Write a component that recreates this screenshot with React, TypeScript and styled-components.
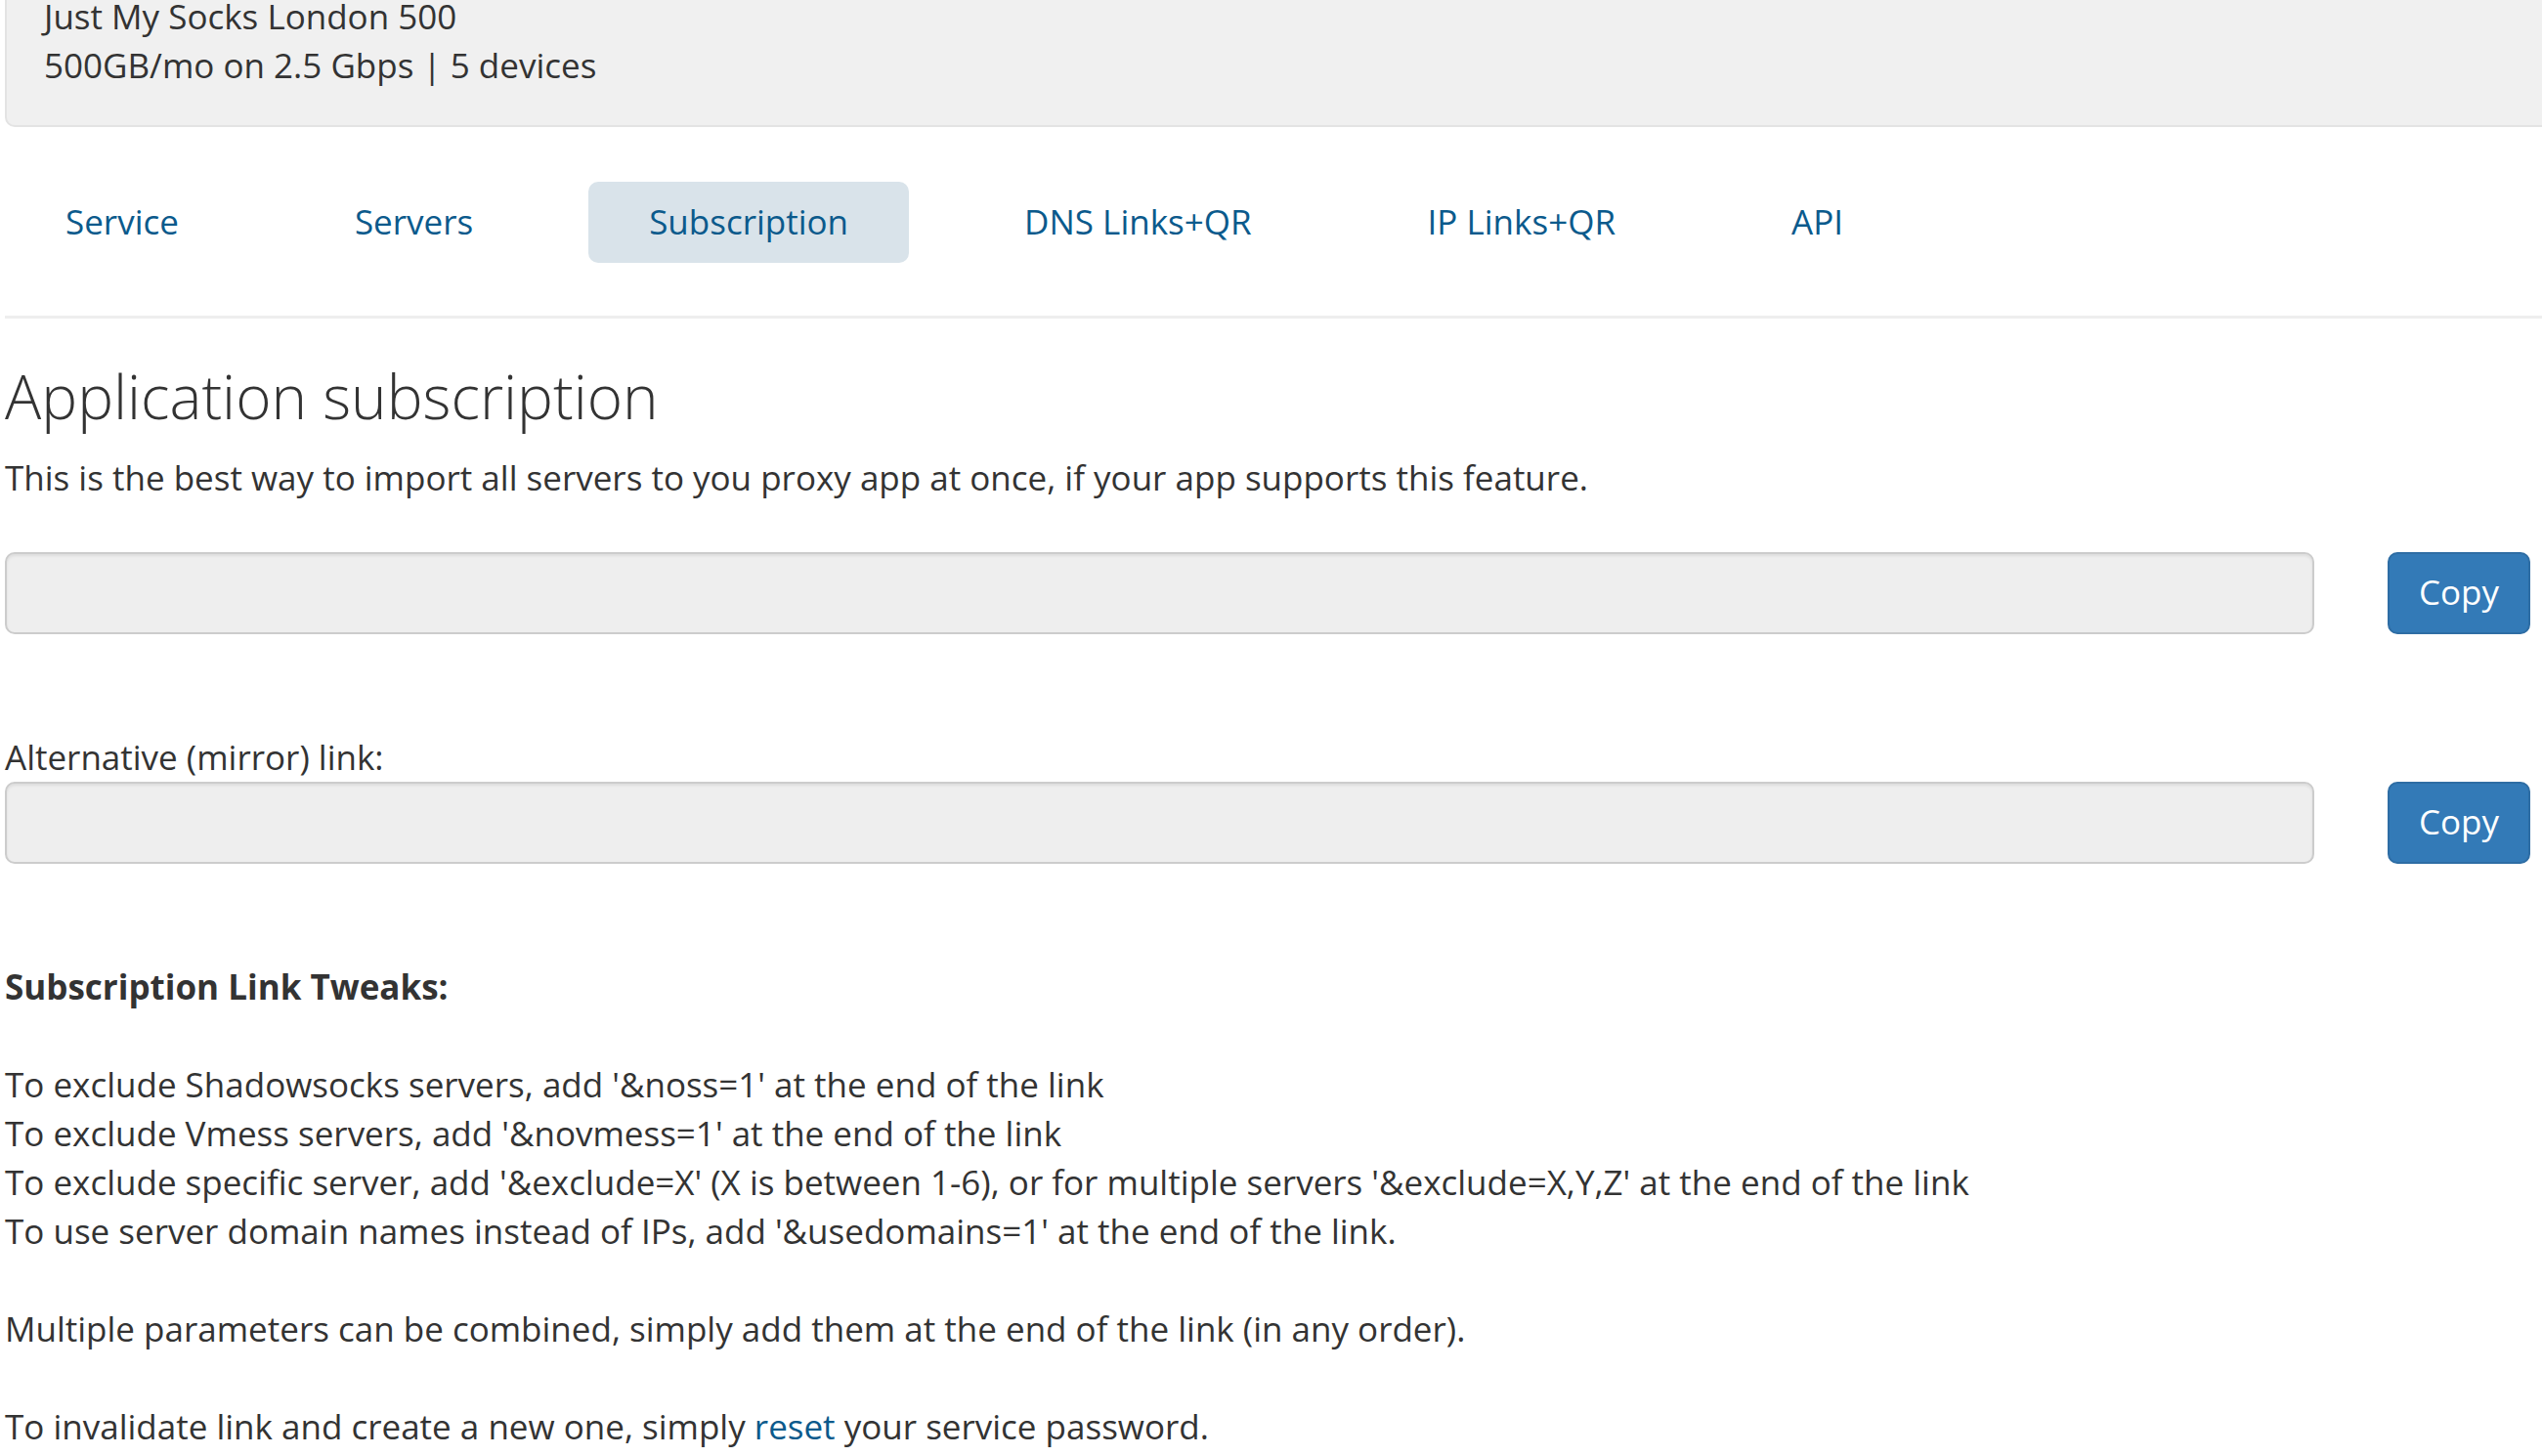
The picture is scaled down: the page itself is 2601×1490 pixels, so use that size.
import styled, { createGlobalStyle } from 'styled-components';

const GlobalStyle = createGlobalStyle`
  html, body {
    margin: 0;
    padding: 0;
    background: #fff;
    overflow-x: hidden;
  }
  body {
    font-family: "Open Sans", "Liberation Sans", sans-serif;
    font-size: 35px;
    line-height: 50px;
    color: #333;
  }
`;

const Page = styled.div`
  padding: 0 0 40px 5px;
`;

const ServiceBox = styled.div`
  margin: -48px -20px 0 0;
  padding: 38px 38px 36px 38px;
  background: #f0f0f0;
  border: 2px solid #e3e3e3;
  border-radius: 10px;
`;

const Tabs = styled.ul`
  display: flex;
  gap: 56px;
  list-style: none;
  margin: 56px 0 0;
  padding: 0 0 54px;
  border-bottom: 3px solid #eee;
`;

const Tab = styled.li<{ $active?: boolean }>`
  display: block;
  padding: 16px 62px 17px;
  border-radius: 10px;
  color: #0b5a8c;
  background: ${(p) => (p.$active ? '#d9e3ea' : 'transparent')};
  cursor: pointer;
`;

const Heading = styled.h3`
  margin: 45px 0 25px;
  font-size: 62px;
  font-weight: 300;
  line-height: 68px;
  color: #333;
`;

const Text = styled.p`
  margin: 0;
`;

const LinkRow = styled.div<{ $top: number }>`
  display: flex;
  gap: 75px;
  padding-right: 12px;
  margin-top: ${(p) => p.$top}px;
`;

const LinkInput = styled.input`
  flex: 1;
  box-sizing: border-box;
  height: 84px;
  padding: 0 30px;
  font: inherit;
  color: #555;
  background: #eee;
  border: 2px solid #ccc;
  border-radius: 10px;
  box-shadow: inset 0 2px 3px rgba(0, 0, 0, 0.075);
  outline: none;
`;

const CopyButton = styled.button`
  box-sizing: border-box;
  width: 146px;
  height: 84px;
  padding: 0 0 2px;
  font: inherit;
  color: #fff;
  background: #337ab7;
  border: 2px solid #2e6da4;
  border-radius: 10px;
  cursor: pointer;
`;

const Label = styled.div`
  margin-top: 101px;
`;

const Tweaks = styled.div`
  margin-top: 101px;
`;

const Blank = styled.div`
  height: 50px;
`;

const Link = styled.a`
  color: #0b5a8c;
  text-decoration: none;
`;

const tabs = ['Service', 'Servers', 'Subscription', 'DNS Links+QR', 'IP Links+QR', 'API'];

const tweaks = [
  "To exclude Shadowsocks servers, add '&noss=1' at the end of the link",
  "To exclude Vmess servers, add '&novmess=1' at the end of the link",
  "To exclude specific server, add '&exclude=X' (X is between 1-6), or for multiple servers '&exclude=X,Y,Z' at the end of the link",
  "To use server domain names instead of IPs, add '&usedomains=1' at the end of the link.",
];

export default function App() {
  return (
    <>
      <GlobalStyle />
      <Page>
        <ServiceBox>
          <div>Just My Socks London 500</div>
          <div>500GB/mo on 2.5 Gbps | 5 devices</div>
        </ServiceBox>

        <Tabs>
          {tabs.map((t) => (
            <Tab key={t} $active={t === 'Subscription'}>{t}</Tab>
          ))}
        </Tabs>

        <Heading>Application subscription</Heading>
        <Text>This is the best way to import all servers to you proxy app at once, if your app supports this feature.</Text>

        <LinkRow $top={51}>
          <LinkInput readOnly value="" />
          <CopyButton>Copy</CopyButton>
        </LinkRow>

        <Label>Alternative (mirror) link:</Label>
        <LinkRow $top={0}>
          <LinkInput readOnly value="" />
          <CopyButton>Copy</CopyButton>
        </LinkRow>

        <Tweaks>
          <b>Subscription Link Tweaks:</b>
          <Blank />
          {tweaks.map((t) => (
            <div key={t}>{t}</div>
          ))}
          <Blank />
          <div>Multiple parameters can be combined, simply add them at the end of the link (in any order).</div>
          <Blank />
          <div>
            To invalidate link and create a new one, simply <Link href="#">reset</Link> your service password.
          </div>
        </Tweaks>
      </Page>
    </>
  );
}
